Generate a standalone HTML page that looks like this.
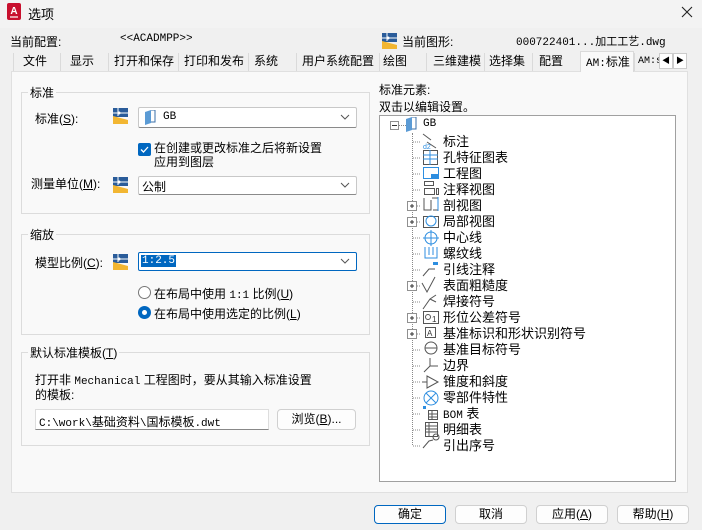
<!DOCTYPE html>
<html><head><meta charset="utf-8"><style>
*{box-sizing:border-box;margin:0;padding:0}
body{width:702px;height:530px;background:#f0f0f0;font-family:"Liberation Sans","Noto Sans CJK SC",sans-serif;font-size:12px;color:#000;position:relative;overflow:hidden}
.a{position:absolute;white-space:nowrap}
.mono{font-family:"Liberation Mono","Noto Sans CJK SC",monospace}
.grp{position:absolute;border:1px solid #dcdcdc}
.lbl{position:absolute;background:#f9f9f9;padding:0 2px;top:-9px;left:6px;white-space:nowrap}
.combo{position:absolute;background:#fff;border:1px solid #c8c8c8;border-bottom-color:#8a8a8a;border-radius:2px}
.chev{position:absolute;right:6px;top:5px}
.btn{position:absolute;background:#fdfdfd;border:1px solid #d0d0d0;border-radius:4px;text-align:center;line-height:17px;white-space:nowrap}
.tab{position:absolute;top:53px;height:18px;border-left:1px solid #dadada;line-height:17px;padding-left:9px;background:#f0f0f0;white-space:nowrap}
.row{position:absolute;left:443px;height:16px;line-height:16px;white-space:nowrap;font-size:13px}
</style></head><body>
<div class="a" style="left:0;top:0;width:702px;height:28px;background:#f3f3f3"></div>
<svg class="a" style="left:7px;top:3px" width="14" height="17"><rect width="14" height="17" rx="2" fill="#c8102e"/><text x="7" y="11" font-size="10" font-weight="bold" fill="#fff" text-anchor="middle" font-family="Liberation Sans">A</text><rect x="3" y="13" width="8" height="2" fill="#fff" opacity=".6"/></svg>
<div class="a" style="left:28px;top:4px;font-size:13px">选项</div>
<svg class="a" style="left:681px;top:6px" width="12" height="12"><path d="M1 1L11 11M11 1L1 11" stroke="#222" stroke-width="1.1"/></svg>
<div class="a" style="left:10px;top:33px">当前配置:</div>
<div class="a mono" style="left:120px;top:33px;font-size:11px">&lt;&lt;ACADMPP&gt;&gt;</div>
<svg class="a" style="left:382px;top:33px" width="15" height="16"><rect width="15" height="9" fill="#2a5c9a"/><path d="M0 8L15 12V16H0Z" fill="#f2b632"/><path d="M5 0V8M0 5H15" stroke="#fff"/><circle cx="6" cy="5" r="1.5" fill="#fff"/></svg>
<div class="a" style="left:402px;top:33px">当前图形:</div>
<div class="a mono" style="left:516px;top:33px;font-size:11px">000722401...加工工艺.dwg</div>
<div class="tab" style="left:13px;width:47px">文件</div>
<div class="tab" style="left:60px;width:48px">显示</div>
<div class="tab" style="left:108px;width:70px;padding-left:5px">打开和保存</div>
<div class="tab" style="left:178px;width:70px;padding-left:5px">打印和发布</div>
<div class="tab" style="left:248px;width:48px;padding-left:5px">系统</div>
<div class="tab" style="left:296px;width:83px;padding-left:5px">用户系统配置</div>
<div class="tab" style="left:379px;width:47px;padding-left:3px">绘图</div>
<div class="tab" style="left:426px;width:58px;padding-left:6px">三维建模</div>
<div class="tab" style="left:484px;width:48px;padding-left:4px">选择集</div>
<div class="tab" style="left:532px;width:48px;padding-left:6px">配置</div>
<div class="tab" style="left:580px;width:54px;top:51px;height:21px;background:#f9f9f9;border:1px solid #dadada;border-bottom:none;padding-left:5px;line-height:20px;z-index:2"><span class="mono" style="font-size:11px">AM:</span>标准</div>
<div class="tab mono" style="left:634px;width:26px;padding-left:3px;font-size:10px;overflow:hidden">AM:s</div>
<div class="a" style="left:659px;top:53px;width:14px;height:16px;background:#fff;border:1px solid #ccc;font-size:8px;text-align:center;line-height:14px">◀</div>
<div class="a" style="left:673px;top:53px;width:14px;height:16px;background:#fff;border:1px solid #ccc;font-size:8px;text-align:center;line-height:14px">▶</div>
<div class="a" style="left:11px;top:71px;width:677px;height:422px;background:#f9f9f9;border:1px solid #e0e0e0"></div>
<div class="grp" style="left:21px;top:92px;width:349px;height:122px"><span class="lbl">标准</span></div>
<div class="a" style="left:35px;top:110px">标准(<u>S</u>):</div>
<svg class="a" style="left:113px;top:108px" width="15" height="16"><rect width="15" height="9" fill="#2a5c9a"/><path d="M0 8L15 12V16H0Z" fill="#f2b632"/><path d="M5 0V8M0 5H15" stroke="#fff"/><circle cx="6" cy="5" r="1.5" fill="#fff"/></svg>
<div class="combo" style="left:138px;top:107px;width:219px;height:21px">
<svg class="a" style="left:5px;top:2px" width="12" height="15"><path d="M1 2L7 0V13L1 15Z" fill="#5b9bd5"/><path d="M7 0H11V12H7" fill="none" stroke="#3a6fa8"/></svg>
<span class="a mono" style="left:24px;top:3px;font-size:11px">GB</span>
<svg class="chev" width="10" height="8"><path d="M1 2L5 6L9 2" fill="none" stroke="#555"/></svg></div>
<div class="a" style="left:138px;top:143px;width:13px;height:13px;background:#0067c0;border-radius:2px"><svg width="13" height="13"><path d="M3 6.5L5.5 9L10 4" fill="none" stroke="#fff" stroke-width="1.3"/></svg></div>
<div class="a" style="left:154px;top:141px;line-height:14px">在创建或更改标准之后将新设置<br>应用到图层</div>
<div class="a" style="left:31px;top:175px">测量单位(<u>M</u>):</div>
<svg class="a" style="left:113px;top:177px" width="15" height="16"><rect width="15" height="9" fill="#2a5c9a"/><path d="M0 8L15 12V16H0Z" fill="#f2b632"/><path d="M5 0V8M0 5H15" stroke="#fff"/><circle cx="6" cy="5" r="1.5" fill="#fff"/></svg>
<div class="combo" style="left:138px;top:176px;width:219px;height:19px"><span class="a" style="left:3px;top:1px">公制</span><svg class="chev" width="10" height="8" style="top:4px"><path d="M1 2L5 6L9 2" fill="none" stroke="#555"/></svg></div>
<div class="grp" style="left:21px;top:234px;width:349px;height:101px"><span class="lbl">缩放</span></div>
<div class="a" style="left:35px;top:254px">模型比例(<u>C</u>):</div>
<svg class="a" style="left:113px;top:254px" width="15" height="16"><rect width="15" height="9" fill="#2a5c9a"/><path d="M0 8L15 12V16H0Z" fill="#f2b632"/><path d="M5 0V8M0 5H15" stroke="#fff"/><circle cx="6" cy="5" r="1.5" fill="#fff"/></svg>
<div class="combo" style="left:138px;top:252px;width:219px;height:19px;border-color:#0067c0"><span class="a mono" style="left:2px;top:2px;background:#0067c0;color:#fff;font-size:11px;padding:0 1px">1:2.5</span><svg class="chev" width="10" height="8" style="top:4px"><path d="M1 2L5 6L9 2" fill="none" stroke="#555"/></svg></div>
<div class="a" style="left:138px;top:286px;width:13px;height:13px;border:1px solid #777;border-radius:50%;background:#fff"></div>
<div class="a" style="left:154px;top:285px">在布局中使用 <span class="mono" style="font-size:11px">1:1</span> 比例(<u>U</u>)</div>
<div class="a" style="left:138px;top:306px;width:13px;height:13px;border-radius:50%;background:#0067c0"><div style="position:absolute;left:4px;top:4px;width:5px;height:5px;border-radius:50%;background:#fff"></div></div>
<div class="a" style="left:154px;top:305px">在布局中使用选定的比例(<u>L</u>)</div>
<div class="grp" style="left:21px;top:352px;width:349px;height:94px"><span class="lbl">默认标准模板(<u>T</u>)</span></div>
<div class="a" style="left:35px;top:374px;line-height:13px">打开非 <span class="mono" style="font-size:11px">Mechanical</span> 工程图时，要从其输入标准设置<br>的模板:</div>
<div class="a" style="left:35px;top:409px;width:234px;height:21px;background:#fff;border:1px solid #ddd;border-bottom-color:#888;padding:3px 0 0 3px"><span class="mono" style="font-size:11px">C:\work\</span>基础资料<span class="mono" style="font-size:11px">\</span>国标模板<span class="mono" style="font-size:11px">.dwt</span></div>
<div class="btn" style="left:277px;top:409px;width:79px;height:21px;line-height:19px">浏览(<u>B</u>)...</div>
<div class="a" style="left:379px;top:81px">标准元素:</div>
<div class="a" style="left:379px;top:98px">双击以编辑设置。</div>
<div class="a" style="left:379px;top:115px;width:297px;height:367px;background:#fff;border:1px solid #a0a0a0"></div>
<div class="a" style="left:412px;top:133px;width:0;height:312px;border-left:1px dotted #888"></div>
<div class="a" style="left:390px;top:121px;width:9px;height:9px;border:1px solid #909090;background:#fff"><div style="position:absolute;left:1px;top:3px;width:5px;height:1px;background:#333"></div></div>
<div class="a" style="left:399px;top:125px;width:7px;border-top:1px dotted #888"></div>
<svg class="a" style="left:405px;top:117px" width="12" height="16"><path d="M1 2L7 0V13L1 15Z" fill="#5b9bd5"/><path d="M7 0H11V12H7" fill="none" stroke="#3a6fa8"/></svg>
<div class="a mono" style="left:423px;top:118px;font-size:11px">GB</div>
<div class="row" style="top:134px">标注</div>
<div class="row" style="top:150px">孔特征图表</div>
<div class="row" style="top:166px">工程图</div>
<div class="row" style="top:182px">注释视图</div>
<div class="row" style="top:198px">剖视图</div>
<div class="row" style="top:214px">局部视图</div>
<div class="row" style="top:230px">中心线</div>
<div class="row" style="top:246px">螺纹线</div>
<div class="row" style="top:262px">引线注释</div>
<div class="row" style="top:278px">表面粗糙度</div>
<div class="row" style="top:294px">焊接符号</div>
<div class="row" style="top:310px">形位公差符号</div>
<div class="row" style="top:326px">基准标识和形状识别符号</div>
<div class="row" style="top:342px">基准目标符号</div>
<div class="row" style="top:358px">边界</div>
<div class="row" style="top:374px">锥度和斜度</div>
<div class="row" style="top:390px">零部件特性</div>
<div class="row" style="top:406px"><span class="mono" style="font-size:11px">BOM</span> 表</div>
<div class="row" style="top:422px">明细表</div>
<div class="row" style="top:438px">引出序号</div>
<svg class="a" style="left:405px;top:130px" width="35" height="320">
<g stroke="#888" stroke-dasharray="1,1">
<path d="M8 12H16M8 28H16M8 44H16M8 60H16M8 76H16M8 92H16M8 108H16M8 124H16M8 140H16M8 156H16M8 172H16M8 188H16M8 204H16M8 220H16M8 236H16M8 252H16M8 268H16M8 284H16M8 300H16M8 316H16"/>
</g>
<g fill="#fff" stroke="#909090"><rect x="2.5" y="71.5" width="9" height="9"/><rect x="2.5" y="87.5" width="9" height="9"/><rect x="2.5" y="151.5" width="9" height="9"/><rect x="2.5" y="183.5" width="9" height="9"/><rect x="2.5" y="199.5" width="9" height="9"/></g>
<g stroke="#333"><path d="M5 76H9M7 74V78M5 92H9M7 90V94M5 156H9M7 154V158M5 188H9M7 186V190M5 204H9M7 202V206"/></g>
<g fill="none" stroke="#555" stroke-width="1">
<path d="M18 4L26 10M22 12L31 18" /><text x="18" y="19" font-size="7" fill="#2d8ee0" stroke="none">d2</text>
<rect x="18.5" y="20.5" width="14" height="14" stroke="#555"/><path d="M18 25H33M18 29H33M25 20V35" stroke="#2d8ee0"/>
<rect x="18.5" y="37.5" width="15" height="11" stroke="#2d8ee0"/><rect x="26" y="44" width="7" height="4" fill="#2d8ee0" stroke="none"/>
<rect x="19.5" y="51.5" width="9" height="4"/><rect x="19.5" y="58.5" width="10" height="6"/><rect x="31.5" y="58.5" width="2" height="6"/>
<path d="M19 68V80H26V70M27 68H33V80H28" /><path d="M33 67V81" stroke="#2d8ee0"/>
<rect x="18.5" y="86.5" width="15" height="11"/><circle cx="26" cy="91" r="5" stroke="#2d8ee0"/>
<circle cx="26" cy="108" r="6" stroke="#2d8ee0"/><path d="M18 108H34M26 100V116" stroke="#2d8ee0"/>
<path d="M20 117V128H32V117M24 117V125M28 117V125" stroke="#2d8ee0"/>
<path d="M18 146L24 139H30"/><rect x="28" y="132" width="5" height="3" fill="#2d8ee0" stroke="none"/>
<path d="M17 153L22 162L30 147"/>
<path d="M18 179L25 169L31 165M25 169L31 172"/>
<rect x="18.5" y="181.5" width="15" height="12"/><circle cx="23" cy="187" r="2.5"/><text x="27" y="192" font-size="8" fill="#333" stroke="none">1</text>
<rect x="20.5" y="197.5" width="10" height="10"/><text x="22" y="206" font-size="8" fill="#333" stroke="none">A</text>
<circle cx="26" cy="218" r="6"/><path d="M20 218H32"/>
<path d="M19 242L25 236V228M25 236H33"/>
<path d="M17 252H22M22 246L33 252L22 258Z"/>
<circle cx="26" cy="268" r="7" stroke="#2d8ee0"/><path d="M21 263L31 273M31 263L21 273" stroke="#2d8ee0"/>
<rect x="18" y="276" width="3" height="3" fill="#2d8ee0" stroke="none"/><rect x="23.5" y="280.5" width="9" height="9"/><path d="M23 284H33M23 287H33M27 280V290"/>
<rect x="20.5" y="292.5" width="12" height="14"/><path d="M20 296H33M20 299H33M20 302H33M24 292V307"/>
<path d="M18 318L24 311L28 310"/><circle cx="31" cy="307" r="3"/>
</g></svg>
<div class="btn" style="left:374px;top:505px;width:72px;height:19px;border:1.5px solid #0067c0">确定</div>
<div class="btn" style="left:455px;top:505px;width:72px;height:19px">取消</div>
<div class="btn" style="left:536px;top:505px;width:72px;height:19px">应用(<u>A</u>)</div>
<div class="btn" style="left:617px;top:505px;width:72px;height:19px">帮助(<u>H</u>)</div>
</body></html>
